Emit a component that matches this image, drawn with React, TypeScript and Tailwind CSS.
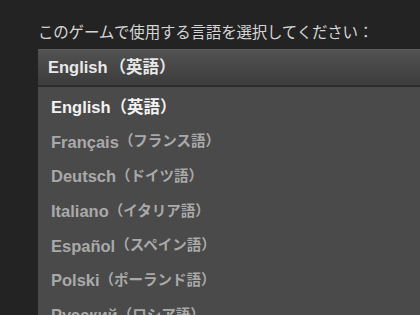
const languages = [
  { name: 'English', jp: '（英語）', active: true },
  { name: 'Français', jp: '（フランス語）' },
  { name: 'Deutsch', jp: '（ドイツ語）' },
  { name: 'Italiano', jp: '（イタリア語）' },
  { name: 'Español', jp: '（スペイン語）' },
  { name: 'Polski', jp: '（ポーランド語）' },
  { name: 'Русский', jp: '（ロシア語）' },
];

const font = "font-['Liberation_Sans','Noto_Sans_CJK_JP',sans-serif]";

export default function App() {
  return (
    <div className="w-[420px] h-[315px] overflow-hidden bg-[#232323] pl-[38px] pt-[20px]">
      <div className="text-[15.5px] leading-[22px] text-[#d4d4d4] font-['Noto_Sans_CJK_JP',sans-serif] tracking-[-0.2px] whitespace-nowrap">
        このゲームで使用する言語を選択してください：
      </div>
      <div className="mt-[7px] h-[38px] flex items-center pl-[10px] bg-gradient-to-b from-[#525252] to-[#3c3c3c] border-t border-[#5c5c5c] border-b-2 border-b-[#2c2c2c]">
        <span className={`${font} font-bold text-[16.5px] text-[#e8e8e8] whitespace-nowrap`}>
          English<span className="text-[16.5px] ml-[2px]">（英語）</span>
        </span>
      </div>
      <div className="bg-[#4a4a4a] h-[300px] pl-[13px] pt-[3px]">
        {languages.map((l) => (
          <div
            key={l.name}
            className={`${font} h-[34.7px] flex items-center font-bold text-[16.5px] whitespace-nowrap ${
              l.active ? 'text-[#f2f2f2]' : 'text-[#a9a9a9]'
            }`}
          >
            {l.name}
            <span className={l.active ? 'text-[16.5px]' : 'text-[14.5px]'}>{l.jp}</span>
          </div>
        ))}
      </div>
    </div>
  );
}
